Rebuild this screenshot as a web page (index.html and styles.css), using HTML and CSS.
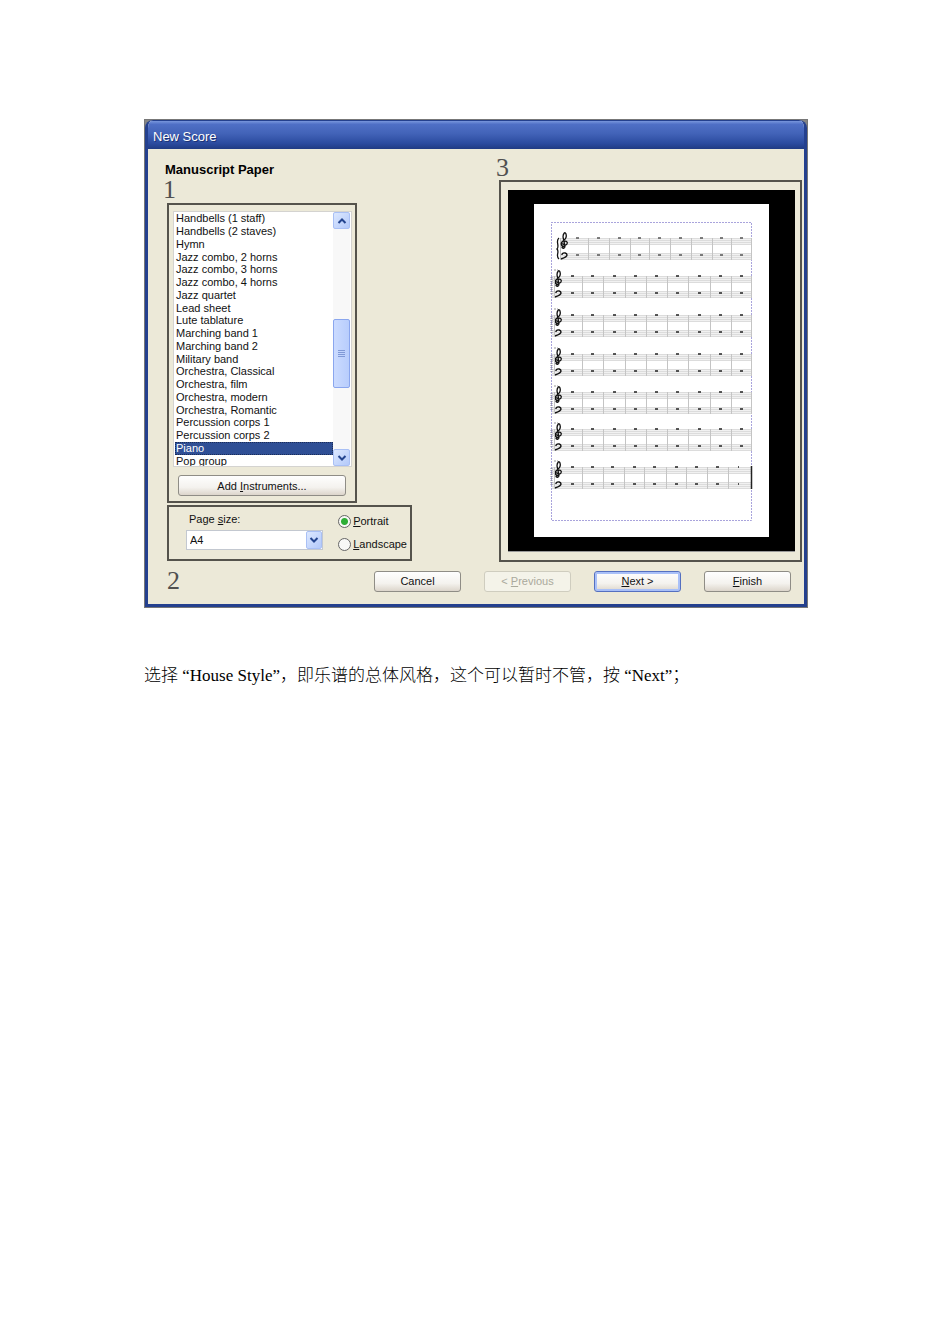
FILE: index.html
```
<!DOCTYPE html>
<html lang="zh-CN">
<head>
    <meta charset="UTF-8">
    <meta name="viewport" content="width=device-width, initial-scale=1.0">
    <title>New Score</title>
    <link rel="stylesheet" href="styles.css">
</head>
<body>
    <main class="page">
        <div class="frame">
        <form class="window">
            <header class="titlebar">New Score</header>
            <div class="content">
                <section class="options">
                    <label class="heading" for="paper">Manuscript Paper</label>
                    <span class="number">1</span>
                    <div class="box paper-box">
                        <div class="list">
                            <select id="paper" size="20">
                                <option>Handbells (1 staff)</option>
                                <option>Handbells (2 staves)</option>
                                <option>Hymn</option>
                                <option>Jazz combo, 2 horns</option>
                                <option>Jazz combo, 3 horns</option>
                                <option>Jazz combo, 4 horns</option>
                                <option>Jazz quartet</option>
                                <option>Lead sheet</option>
                                <option>Lute tablature</option>
                                <option>Marching band 1</option>
                                <option>Marching band 2</option>
                                <option>Military band</option>
                                <option>Orchestra, Classical</option>
                                <option>Orchestra, film</option>
                                <option>Orchestra, modern</option>
                                <option>Orchestra, Romantic</option>
                                <option>Percussion corps 1</option>
                                <option>Percussion corps 2</option>
                                <option selected>Piano</option>
                                <option>Pop group</option>
                            </select>
                            <div class="scrollbar">
                                <button type="button" class="arrow" aria-label="Scroll up">
                                    <svg viewBox="0 0 10 8"><path d="M1.5 6 5 2.5 8.5 6"/></svg>
                                </button>
                                <div class="thumb"><svg viewBox="0 0 7 8"><path d="M0 .5h7M0 2.5h7M0 4.5h7M0 6.5h7"/></svg></div>
                                <button type="button" class="arrow" aria-label="Scroll down">
                                    <svg viewBox="0 0 10 8"><path d="M1.5 2 5 5.5 8.5 2"/></svg>
                                </button>
                            </div>
                        </div>
                        <button type="button" class="btn add">Add <u>I</u>nstruments...</button>
                    </div>
                    <div class="box size-box">
                        <div class="size">
                            <label for="size">Page <u>s</u>ize:</label>
                            <div class="dropdown">
                                <select id="size"><option>A4</option></select>
                                <span class="arrow"><svg viewBox="0 0 10 8"><path d="M1.5 2 5 5.5 8.5 2"/></svg></span>
                            </div>
                        </div>
                        <div class="orientation">
                            <label><input type="radio" name="orientation" checked><span><u>P</u>ortrait</span></label>
                            <label><input type="radio" name="orientation"><span><u>L</u>andscape</span></label>
                        </div>
                    </div>
                </section>
                <section class="preview">
                    <span class="number">3</span>
                    <div class="box preview-box">
                        <div class="mat">
                            <svg class="sheet" viewBox="0 0 235 333">
                                <defs>
                                    <g id="clefs">
                                        <path d="M5 9C1 9 0 5 3 3S7-1 6-4 3-4 3-1L5 8C5 11 2 11 2 9M4 4C6 2 8 4 7 6S2 7 3 5" fill="none" stroke="#111" stroke-width="1.3"/>
                                        <path d="M2 16C4 14 7 15 7 17S4 20 1 21M2 16v1" fill="none" stroke="#111" stroke-width="1.4"/>
                                    </g>
                                    <g id="staves">
                                        <path d="M18 0H217V7H18zM18 15H217V22H18z" fill="#f1f1f1"/>
                                        <path d="M18 .5H217M18 2.5H217M18 4.5H217M18 6.5H217M18 15.5H217M18 17.5H217M18 19.5H217M18 21.5H217" stroke="#dcdcdc"/>
                                        <use href="#clefs" x="20"/>
                                        <path d="M17.5 1V19" stroke="#8f8da6" stroke-width="2" stroke-dasharray="1 1"/>
                                        <path d="M20-6h2M23-6h1" stroke="#999"/>
                                    </g>
                                    <g id="system">
                                        <use href="#staves"/>
                                        <path d="M20.5 0V22M48.5 0V22M69.5 0V22M91.5 0V22M112.5 0V22M133.5 0V22M154.5 0V22M176.5 0V22M197.5 0V22M217.5 0V22" stroke="#c4c4c4"/>
                                        <path d="M37 0h3M57 0h3M79 0h3M100 0h3M121 0h3M142 0h3M164 0h3M185 0h3M206 0h3M37 17h3M57 17h3M79 17h3M100 17h3M121 17h3M142 17h3M164 17h3M185 17h3M206 17h3" stroke="#222" stroke-width="1.5"/>
                                    </g>
                                </defs>
                                <path d="M17 18.5H217.5V316.5H17.5V18" fill="none" stroke="#a9a4dc" stroke-dasharray="2 1"/>
                                <!-- first system, indented with a brace -->
                                <g transform="translate(0 34)">
                                    <path d="M26 0H217V7H26zM26 15H217V22H26z" fill="#f1f1f1"/>
                                    <path d="M26 .5H217M26 2.5H217M26 4.5H217M26 6.5H217M26 15.5H217M26 17.5H217M26 19.5H217M26 21.5H217" stroke="#dcdcdc"/>
                                    <path d="M26.5 0V22M54.5 0V22M75.5 0V22M96.5 0V22M115.5 0V22M136.5 0V22M157.5 0V22M178.5 0V22M197.5 0V22M217.5 0V22" stroke="#c4c4c4"/>
                                    <path d="M42 0h3M63 0h3M84 0h3M104 0h3M124 0h3M145 0h3M166 0h3M186 0h3M206 0h3M42 17h3M63 17h3M84 17h3M104 17h3M124 17h3M145 17h3M166 17h3M186 17h3M206 17h3" stroke="#555" stroke-width="1.5"/>
                                    <path d="M25 0C21 3 26 8 23 11 26 14 21 18 25 21" fill="none" stroke="#111" stroke-width="1.3"/>
                                    <use href="#clefs" x="26"/>
                                </g>
                                <use href="#system" y="72"/>
                                <use href="#system" y="111"/>
                                <use href="#system" y="150"/>
                                <use href="#system" y="188"/>
                                <use href="#system" y="225"/>
                                <!-- last system with the final barline -->
                                <g transform="translate(0 263)">
                                    <use href="#staves"/>
                                    <path d="M20.5 0V22M48.5 0V22M69.5 0V22M90.5 0V22M110.5 0V22M132.5 0V22M152.5 0V22M173.5 0V22M194.5 0V22" stroke="#c4c4c4"/>
                                    <path d="M37 0h3M57 0h3M77 0h3M99 0h3M119 0h3M141 0h3M161 0h3M182 0h3M204 0h1M37 17h3M57 17h3M77 17h3M99 17h3M119 17h3M141 17h3M161 17h3M182 17h3M204 17h1" stroke="#222" stroke-width="1.5"/>
                                    <path d="M217.5-1V22" stroke="#222" stroke-width="1.5"/>
                                </g>
                            </svg>
                        </div>
                    </div>
                </section>
            </div>
            <footer class="footer">
                <span class="number">2</span>
                <div class="buttons">
                    <button type="button" class="btn">Cancel</button>
                    <button type="button" class="btn" disabled>&lt; <u>P</u>revious</button>
                    <button type="button" class="btn next"><u>N</u>ext &gt;</button>
                    <button type="button" class="btn"><u>F</u>inish</button>
                </div>
            </footer>
        </form>
        </div>
        <p class="caption">选择 “House Style”，即乐谱的总体风格，这个可以暂时不管，按 “Next”；</p>
    </main>
</body>
</html>
```
FILE: styles.css
```
* {
    box-sizing: border-box;
}
body {
    margin: 0;
    background: white;
    color: #111;
    font-family: "Liberation Sans", Arial, sans-serif;
    font-size: 11px;
}
.page {
    max-width: 666px;
    margin: 0 auto;
    padding: 119px 0 0 2px;
}
.frame {
    background: #858585;
    border: 1px solid #777;
}
.window {
    background: #ece9d8;
    border: 3px solid #24408e;
    border-top: 0;
    border-radius: 8px 8px 0 0;
    overflow: hidden;
}
.titlebar {
    height: 29px;
    margin: 0 -3px;
    padding-left: 8px;
    border-top: 1px solid #24408e;
    background: linear-gradient(#7896dc, #4f6fc6 12%, #4263b8 45%, #2b4b9f 80%, #203b83);
    color: white;
    font-size: 13px;
    line-height: 31px;
    text-shadow: 1px 1px #1b3274;
}
.content {
    display: flex;
    justify-content: space-between;
    padding: 7px 2px 0 19px;
}
.options {
    display: flex;
    flex-direction: column;
    align-items: flex-start;
}
.heading {
    margin: 6px 0 0 -2px;
    color: black;
    font-size: 13px;
    font-weight: bold;
    line-height: 16px;
}
.number {
    display: block;
    color: #505050;
    font-family: "Liberation Serif", serif;
    font-size: 26px;
    line-height: 24px;
}
.options > .number {
    margin-left: -4px;
}
.box {
    border: 2px solid #55534c;
}
.paper-box {
    width: 190px;
    margin-top: 1px;
    padding: 6px 3px 5px 4px;
}
.list {
    display: flex;
    height: 256px;
    background: white;
    border: 1px solid #d4d3d0;
}
.list select {
    flex: 1;
    height: 254px;
    padding: 0 0 0 1px;
    background: white;
    border: 0;
    outline: none;
    color: #111;
    font: inherit;
    scrollbar-width: none;
}
.list option {
    height: 13px;
    min-height: 0;
    padding: 0 1px;
    line-height: 13px;
}
.list option:nth-child(4n) {
    height: 12px;
}
.list option:checked {
    background: linear-gradient(#2f4f95, #2f4f95);
    color: white;
    outline: 1px dotted #1b2d58;
    outline-offset: -1px;
}
.scrollbar {
    display: flex;
    flex-direction: column;
    width: 17px;
    margin-right: 1px;
    background: #f8f8f8;
}
.arrow {
    display: flex;
    align-items: center;
    justify-content: center;
    width: 17px;
    height: 17px;
    padding: 0;
    background: linear-gradient(135deg, #dce8ff, #b3c9fa);
    border: 1px solid #a9c0f5;
    border-radius: 2px;
}
.arrow svg {
    width: 10px;
    height: 8px;
    fill: none;
    stroke: #24458f;
    stroke-width: 2;
}
.thumb {
    display: flex;
    align-items: center;
    justify-content: center;
    height: 69px;
    margin: 90px 0 auto;
    background: linear-gradient(90deg, #cbdbff, #b8cdfc);
    border: 1px solid #8aa6ee;
    border-radius: 2px;
}
.thumb svg {
    width: 7px;
    height: 8px;
    stroke: #8099d6;
}
.btn {
    width: 87px;
    height: 21px;
    padding: 0;
    background: linear-gradient(#fefefe, #f4f2ee 60%, #dcd5cb);
    border: 1px solid #8f8d86;
    border-radius: 3px;
    color: #111;
    font: inherit;
}
.btn:disabled {
    background: #f4f3e9;
    border-color: #cfcdbf;
    color: #aaa99c;
}
.btn.next {
    border-color: #5570c0;
    box-shadow: inset 0 0 0 2px #a9c0f8;
}
.btn.add {
    display: block;
    width: 168px;
    margin: 8px 0 0 5px;
}
.size-box {
    display: flex;
    justify-content: space-between;
    width: 245px;
    height: 56px;
    margin-top: 2px;
    padding: 5px 3px 0 17px;
}
.size label {
    display: block;
    padding-left: 3px;
    line-height: 14px;
}
.dropdown {
    position: relative;
    width: 137px;
    margin-top: 4px;
}
.dropdown select {
    appearance: none;
    display: block;
    width: 100%;
    height: 20px;
    padding: 0 20px 0 3px;
    background: white;
    border: 1px solid #c3c8d0;
    border-radius: 0;
    color: #111;
    font: inherit;
}
.dropdown .arrow {
    position: absolute;
    top: 1px;
    right: 1px;
    width: 16px;
    height: 18px;
    pointer-events: none;
}
.orientation {
    display: flex;
    flex-direction: column;
    gap: 9px;
    padding-top: 2px;
}
.orientation label {
    display: flex;
    align-items: center;
    gap: 2px;
    height: 14px;
}
.orientation input {
    appearance: none;
    width: 13px;
    height: 13px;
    margin: 0;
    background: #f8f8f6;
    border: 1px solid #666;
    border-radius: 50%;
}
.orientation input:checked {
    background: radial-gradient(circle, #2eae36 3px, #f8f8f6 4px);
}
.preview {
    width: 303px;
}
.preview .number {
    margin-left: -3px;
}
.preview-box {
    height: 382px;
    padding: 8px 5px 8px 7px;
}
.mat {
    display: flex;
    align-items: center;
    justify-content: center;
    height: 100%;
    background: black;
    border-bottom: 1px solid #999;
}
.sheet {
    width: 235px;
    height: 333px;
    background: white;
}
.footer {
    display: flex;
    justify-content: space-between;
    align-items: center;
    padding: 7px 13px 11px 19px;
}
.buttons {
    display: flex;
    gap: 23px;
}
.caption {
    margin: 56px 0 0;
    color: black;
    font-family: "Liberation Serif", "Noto Sans CJK SC", serif;
    font-size: 17px;
    font-weight: 300;
    line-height: 24px;
}
```
